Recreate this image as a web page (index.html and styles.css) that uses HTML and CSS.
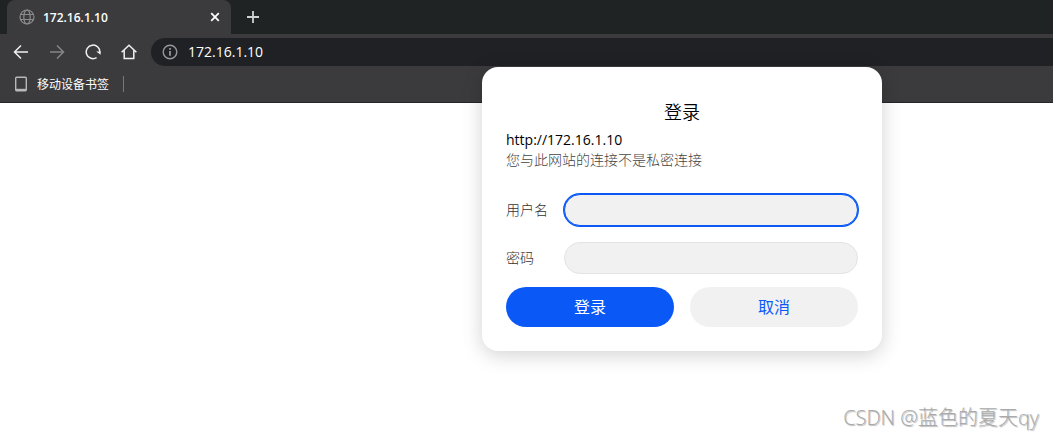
FILE: index.html
```html
<!DOCTYPE html>
<html lang="zh-CN">
<head>
  <meta charset="UTF-8" />
  <meta name="viewport" content="width=device-width, initial-scale=1.0"/>
  <title>172.16.1.10</title>
  <link rel="stylesheet" href="styles.css">
</head>
<body>

  <header class="browser">
    <div class="tab-strip">
      <div class="tab">
        <svg class="icon" width="16" height="16" viewBox="0 0 16 16" stroke="#8b8b8c" stroke-width="1.2">
          <circle cx="8" cy="8" r="7"/>
          <ellipse cx="8" cy="8" rx="3.2" ry="7"/>
          <path d="M1.8 5.5h12.4M1.8 10.5h12.4"/>
        </svg>
        <span class="tab-title">172.16.1.10</span>
        <button class="icon-btn" type="button" aria-label="关闭标签页">
          <svg class="icon" width="10" height="10" viewBox="0 0 10 10" stroke="#fff" stroke-width="1.8"><path d="M1.2 1.2l7.6 7.6M8.8 1.2L1.2 8.8"/></svg>
        </button>
      </div>
      <button class="icon-btn new-tab" type="button" aria-label="新建标签页">
        <svg class="icon" width="12" height="12" viewBox="0 0 12 12" stroke="#d0d1d1" stroke-width="1.8"><path d="M6 0v12M0 6h12"/></svg>
      </button>
    </div>

    <div class="toolbar">
      <nav class="nav">
        <button class="icon-btn" type="button" aria-label="后退">
          <svg class="icon" width="16" height="16" viewBox="0 0 16 16" stroke="#f1f1f1" stroke-width="1.5"><path d="M15 8H1.5M8 1.5L1.5 8 8 14.5"/></svg>
        </button>
        <button class="icon-btn" type="button" aria-label="前进">
          <svg class="icon" width="16" height="16" viewBox="0 0 16 16" stroke="#858586" stroke-width="1.5"><path d="M1 8h13.5M8 1.5L14.5 8 8 14.5"/></svg>
        </button>
        <button class="icon-btn" type="button" aria-label="刷新">
          <svg class="icon" width="16" height="16" viewBox="0 0 16 16" stroke="#f1f1f1" stroke-width="1.5">
            <path d="M11.6 13.7A6.8 6.8 0 1 1 14.8 8.6"/>
            <path d="M11.2 7.6h4.4v3.2z" fill="#f1f1f1" stroke="none"/>
          </svg>
        </button>
        <button class="icon-btn" type="button" aria-label="主页">
          <svg class="icon" width="16" height="16" viewBox="0 0 16 16" stroke="#f1f1f1" stroke-width="1.5"><path d="M.6 8.3L8 1.2l7.4 7.1M3.2 6.4v8.1h9.6V6.4"/></svg>
        </button>
      </nav>
      <div class="address">
        <svg class="icon" width="16" height="16" viewBox="0 0 16 16" stroke="#96979a" stroke-width="1.4">
          <circle cx="8" cy="8" r="6.8"/>
          <path d="M8 7v4.8M8 4v1.8" stroke-width="1.8"/>
        </svg>
        <input class="address-input" type="text" value="172.16.1.10" aria-label="地址栏" />
      </div>
    </div>

    <div class="bookmarks">
      <a class="bookmark" href="#">
        <svg class="icon" width="12" height="16" viewBox="0 0 12 16" stroke="#b8b8b9" stroke-width="1.4">
          <rect x=".7" y="1.2" width="10.6" height="13.6" rx="1"/>
          <path d="M1 13.8h10" stroke-width="2"/>
        </svg>
        <span>移动设备书签</span>
      </a>
    </div>
  </header>

  <form class="login" id="loginForm">
    <h1 class="login-title">登录</h1>
    <p class="login-host">http://172.16.1.10</p>
    <p class="login-note">您与此网站的连接不是私密连接</p>

    <div class="field">
      <label for="username">用户名</label>
      <input class="active" type="text" id="username" />
    </div>
    <div class="field">
      <label for="password">密码</label>
      <input type="password" id="password" />
    </div>

    <div class="actions">
      <button class="btn btn-primary" type="submit">登录</button>
      <button class="btn" type="button">取消</button>
    </div>
  </form>

  <footer class="watermark">CSDN @蓝色的夏天qy</footer>

</body>
</html>
```

FILE: styles.css
```css
* {
  box-sizing: border-box;
}

body {
  margin: 0;
  min-height: 100vh;
  display: flex;
  flex-direction: column;
  font-family: "Open Sans", "Noto Sans CJK SC", sans-serif;
  background: #fff;
  color: #000;
}

button,
input {
  font-family: inherit;
}

.icon {
  display: block;
  flex: none;
  fill: none;
}

.icon-btn {
  padding: 0;
  border: none;
  background: none;
  cursor: pointer;
}

/* browser chrome */
.browser {
  background: #3b3b3d;
  border-bottom: 1px solid #252527;
  color: #fff;
}

.tab-strip {
  display: flex;
  height: 34px;
  padding-left: 7px;
  background: #1f2324;
}

.tab {
  display: flex;
  align-items: center;
  width: 224px;
  padding: 0 11px 0 12px;
  background: #3b3b3d;
  border-radius: 8px 8px 0 0;
}

.tab-title {
  flex: 1;
  margin-left: 8px;
  font-size: 12px;
  font-weight: 600;
}

.new-tab {
  padding: 0 16px;
}

.toolbar {
  display: flex;
  align-items: center;
  height: 36px;
}

.nav {
  display: flex;
  gap: 20px;
  padding: 0 14px 0 13px;
}

.address {
  flex: 1;
  display: flex;
  align-items: center;
  gap: 10px;
  height: 28px;
  padding-left: 11px;
  background: #202124;
  border-radius: 14px 0 0 14px;
}

.address-input {
  flex: 1;
  padding: 0 0 2px;
  border: none;
  outline: none;
  background: none;
  color: #fff;
  font-size: 14px;
  font-weight: 500;
}

.bookmarks {
  display: flex;
  align-items: center;
  height: 32px;
  padding: 0 15px 4px;
}

.bookmark {
  display: flex;
  align-items: center;
  gap: 10px;
  height: 16px;
  padding-right: 14px;
  border-right: 1px solid #777779;
  color: #fff;
  font-size: 12px;
  text-decoration: none;
}

/* login dialog, lies over the toolbar */
.login {
  position: absolute;
  top: 67px;
  left: 482px;
  width: 400px;
  padding: 33px 24px 24px;
  background: #fff;
  border-radius: 16px;
  box-shadow: 0 4px 20px rgba(0, 0, 0, 0.18);
  font-size: 14px;
  line-height: 20px;
}

.login-title {
  margin: 0 0 5px;
  font-size: 18px;
  font-weight: 350;
  line-height: 25px;
  text-align: center;
}

.login-host,
.login-note {
  margin: 0;
}

.login-note {
  margin-bottom: 24px;
  color: #444;
  font-weight: 300;
}

.field {
  display: flex;
  align-items: center;
  margin-bottom: 16px;
}

.field label {
  width: 58px;
  color: #333;
  font-weight: 300;
}

.field input {
  flex: 1;
  min-width: 0;
  height: 32px;
  padding: 0 14px;
  border: 1px solid #e4e4e4;
  border-radius: 16px;
  outline: none;
  background: #f1f1f1;
  font-size: 14px;
}

.field input.active {
  border-color: #0a59f7;
  box-shadow: 0 0 0 1px #0a59f7;
}

.actions {
  display: flex;
  gap: 16px;
  margin-top: -3px;
}

.btn {
  flex: 1;
  height: 40px;
  padding: 0 0 2px;
  border: none;
  border-radius: 20px;
  background: #f1f1f1;
  color: #0a59f7;
  font-size: 16px;
  cursor: pointer;
}

.btn-primary {
  background: #0a59f7;
  color: #fff;
}

.watermark {
  margin-top: auto;
  padding: 0 14px 8px;
  color: #aaa;
  font-size: 20px;
  font-weight: 300;
  line-height: 26px;
  text-align: right;
  text-shadow: 1px 1px 1px #bbb;
}
```
